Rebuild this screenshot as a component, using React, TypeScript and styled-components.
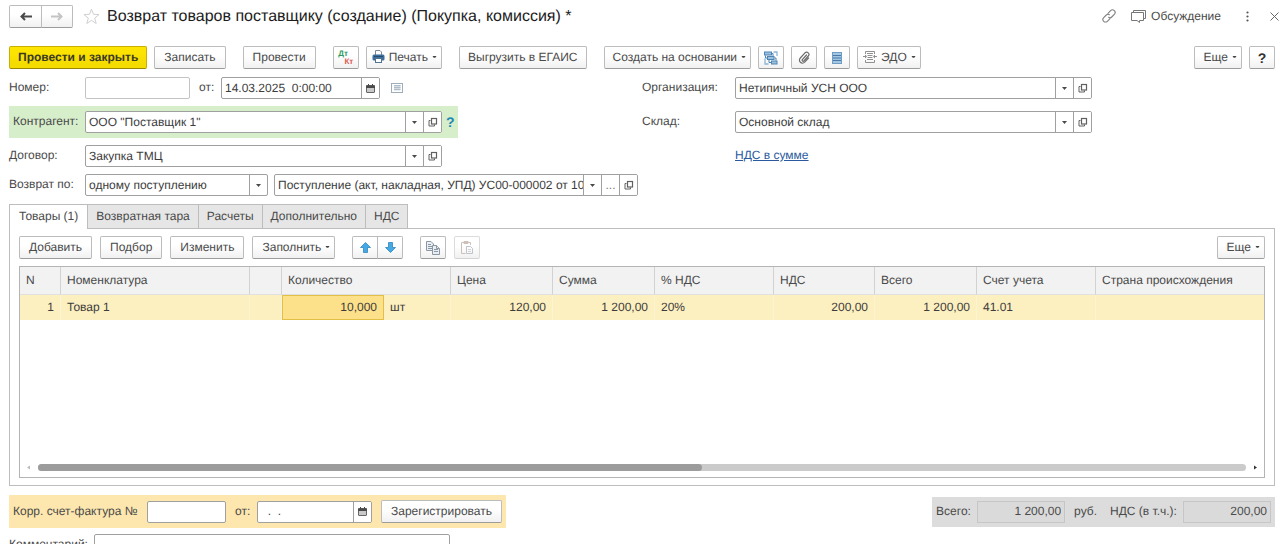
import React from "react";
import styled, { createGlobalStyle, css } from "styled-components";

const Global = createGlobalStyle`
  *, *::before, *::after { box-sizing: border-box; }
  body { margin: 0; background: #fff; text-rendering: geometricPrecision; }
  body, button, input, select {
    font-family: "Liberation Sans", Arial, sans-serif;
    font-size: 12px;
    line-height: 16px;
    color: #4a4a4a;
  }
  button, input, select { text-rendering: inherit; }
`;

const Page = styled.main`
  max-height: calc(100vh - 5px);
  overflow: hidden;
  padding: 5px 5px 0 9px;
`;

const TitleBar = styled.header`
  display: flex;
  align-items: center;
  height: 22px;
  margin-right: -4px;
`;

const Title = styled.h1`
  margin: 0 auto 0 7px;
  padding-top: 2px;
  font-size: 16px;
  line-height: 20px;
  font-weight: 400;
  color: #1c1c1c;
  white-space: nowrap;
`;

const Plain = styled.button`
  display: flex;
  align-items: center;
  gap: 5px;
  padding: 0;
  border: 0;
  background: none;
`;

const TitleActions = styled.div`
  display: flex;
  align-items: center;
  gap: 15px;
`;

const MenuActions = styled.div`
  display: flex;
  align-items: center;
  gap: 21px;
  margin-left: 10px;
`;

const Pair = styled.div`
  display: flex;
  button:first-child { border-radius: 2px 0 0 2px; }
  button:last-child { border-radius: 0 2px 2px 0; margin-left: -1px; }
`;

const Button = styled.button<{
  $primary?: boolean;
  $menu?: boolean;
  $lead?: boolean;
  $long?: boolean;
  $icon?: number;
  $dim?: boolean;
}>`
  --side: ${(p) => (p.$long ? 8 : 9)}px;
  display: flex;
  flex: none;
  align-items: center;
  justify-content: center;
  gap: 4px;
  height: 23px;
  padding: 0 ${(p) => (p.$menu ? "4px" : "var(--side)")} 2px ${(p) => (p.$lead ? "5px" : "var(--side)")};
  border: 1px solid ${(p) => (p.$dim ? "#dcdcdc" : "#bcbcbc")};
  border-bottom-color: ${(p) => (p.$dim ? "#d4d4d4" : "#9c9c9c")};
  border-radius: 2px;
  background: linear-gradient(#fff 40%, #f1f1f1);
  white-space: nowrap;
  ${(p) => p.$icon && css`width: ${p.$icon}px; padding: 0;`}
  ${(p) =>
    p.$primary &&
    css`
      border-color: #c9b000;
      border-bottom-color: #9b8800;
      background: linear-gradient(#ffe600, #f3da00);
      color: #3a3a20;
      font-weight: 700;
    `}
`;

const Mark = styled.b`
  font-size: 14px;
  color: #333;
`;

const Toolbar = styled.div<{ $top?: number; $gap: number }>`
  display: flex;
  align-items: center;
  gap: ${(p) => p.$gap}px;
  margin-top: ${(p) => p.$top ?? 0}px;
`;

const Gap = styled.span<{ $w: number }>`
  width: ${(p) => p.$w}px;
`;

const Spring = styled.span`
  flex: 1;
`;

const FormGrid = styled.div`
  display: grid;
  grid-template-columns: 1fr 1fr;
  margin-top: 8px;
`;

const Column = styled.div<{ $gap: number }>`
  display: flex;
  flex-direction: column;
  align-items: flex-start;
  gap: ${(p) => p.$gap}px;
`;

const Row = styled.div<{ $tint?: string }>`
  display: flex;
  align-items: center;
  min-height: 22px;
  ${(p) =>
    p.$tint &&
    css`
      padding: 5px 4px;
      background: ${p.$tint};
    `}
`;

const Label = styled.label<{ $w?: number }>`
  flex: none;
  width: ${(p) => (p.$w ? p.$w + "px" : "auto")};
  padding-bottom: 2px;
  white-space: nowrap;
`;

const FieldBox = styled.div<{ $w: number; $soft?: boolean }>`
  display: flex;
  width: ${(p) => p.$w}px;
  height: 22px;
  border: 1px solid ${(p) => (p.$soft ? "#c4c4c4" : "#a0a0a0")};
  border-radius: 2px;
  background: #fff;
  overflow: hidden;
`;

const TextInput = styled.input`
  flex: 1;
  min-width: 0;
  padding: 0 0 1px 3px;
  border: 0;
  background: none;
  color: #3c3c3c;
`;

const FieldButton = styled.button`
  display: flex;
  flex: none;
  align-items: center;
  justify-content: center;
  width: 18px;
  padding: 0;
  border: 0;
  border-left: 1px solid #a0a0a0;
  background: #fff;
  color: #777;
`;

const SelectBox = styled.div`
  display: grid;
  width: 183px;
  height: 22px;
  border: 1px solid #a0a0a0;
  border-radius: 2px;
  > * { grid-area: 1 / 1; }
`;

const Select = styled.select`
  appearance: none;
  padding: 0 20px 1px 3px;
  border: 0;
  background: none;
  color: #3c3c3c;
`;

const SelectArrow = styled.span`
  display: flex;
  align-items: center;
  justify-content: center;
  justify-self: end;
  width: 18px;
  border-left: 1px solid #a0a0a0;
  pointer-events: none;
`;

const Link = styled.a`
  padding-bottom: 2px;
  color: #2a5aa0;
  text-decoration: underline;
`;

const HelpLink = styled.button`
  width: 12px;
  padding: 0 0 0 4px;
  border: 0;
  background: none;
  color: #1d87b5;
  font-size: 14px;
  font-weight: 700;
`;

const Tabs = styled.div`
  display: flex;
  margin-top: 8px;
`;

const Tab = styled.button<{ $active?: boolean }>`
  position: relative;
  height: ${(p) => (p.$active ? 25 : 24)}px;
  margin-bottom: ${(p) => (p.$active ? -1 : 0)}px;
  padding: 0 ${(p) => (p.$active ? 9 : 8)}px 2px;
  border: 1px solid #bdbdbd;
  border-left-width: ${(p) => (p.$active ? 1 : 0)}px;
  border-bottom-width: 0;
  background: ${(p) => (p.$active ? "#fff" : "#e6e6e6")};
`;

const Panel = styled.section`
  padding: 7px 9px 7px;
  border: 1px solid #bdbdbd;
`;

const TableFrame = styled.div`
  margin-top: 7px;
  border: 1px solid #b4b4b4;
`;

const Table = styled.table`
  width: 100%;
  table-layout: fixed;
  border-collapse: separate;
  border-spacing: 0;
`;

const Th = styled.th`
  height: 28px;
  padding: 0 6px 2px;
  border-right: 1px solid #d2d2d2;
  border-bottom: 1px solid #e0e0e0;
  background: #f2f2f2;
  font-weight: 400;
  text-align: left;
  white-space: nowrap;
  &:last-child { border-right: 0; }
`;

const Td = styled.td<{ $right?: boolean; $current?: boolean }>`
  height: 25px;
  padding: 0 6px 2px;
  border-right: 1px solid #fbf3d2;
  background: #fcefc0;
  color: #3c3c3c;
  text-align: ${(p) => (p.$right ? "right" : "left")};
  white-space: nowrap;
  &:last-child { border-right: 0; }
  ${(p) =>
    p.$current &&
    css`
      border: 1px solid #e3bf45;
      background: #fde08a;
    `}
`;

const TableSpace = styled.div`
  height: 144px;
`;

const ScrollRow = styled.div`
  display: flex;
  align-items: center;
  gap: 6px;
  height: 7px;
  margin: 0 6px 6px;
`;

const Track = styled.div`
  flex: 1;
  height: 7px;
  border-radius: 4px;
  background: #cbcbcb;
`;

const Thumb = styled.div`
  width: 55%;
  height: 7px;
  border-radius: 4px;
  background: #9c9c9c;
`;

const Footer = styled.footer`
  display: flex;
  align-items: center;
  justify-content: space-between;
  margin-top: 9px;
`;

const Totals = styled.div`
  display: flex;
  align-items: center;
  height: 30px;
  padding: 0 4px;
  background: #dcdcdc;
`;

const TotalField = styled.input`
  width: 88px;
  height: 22px;
  padding: 0 3px 2px;
  border: 1px solid #c6c6c6;
  background: #dadada;
  text-align: right;
`;

const Unit = styled.span`
  padding-bottom: 2px;
`;

const CommentRow = styled.div`
  display: flex;
  align-items: center;
  margin-top: 6px;
`;

const Caret = () => (
  <svg width="5" height="3" viewBox="0 0 5 3" aria-hidden="true">
    <path d="M0 0H5L2.5 3Z" fill="#4a4a4a" />
  </svg>
);

const Dash = () => (
  <svg width="5" height="3" viewBox="0 0 5 3" aria-hidden="true">
    <path d="M0.500 1H4.500L3.300 2.800H1.700Z" fill="#444" />
  </svg>
);

const OpenIcon = () => (
  <svg width="10" height="10" viewBox="0 0 10 10" fill="none" stroke="#606060" aria-hidden="true">
    <rect x="3.500" y="1.500" width="5" height="5.500" strokeWidth="1.200" />
    <path d="M2.500 3.500H1V9H6.500V7.500" />
  </svg>
);

const Calendar = () => (
  <svg width="9" height="9" viewBox="0 0 9 9" aria-hidden="true">
    <rect x="0.500" y="1.500" width="8" height="7" rx="0.500" fill="#c9c9c9" stroke="#666" />
    <path d="M0 1.500H9V4H0Z" fill="#4a4a4a" />
    <path d="M2.500 0V2M6.500 0V2" stroke="#4a4a4a" />
  </svg>
);

const ListIcon = () => (
  <svg width="12" height="10" viewBox="0 0 12 10" fill="none" aria-hidden="true">
    <rect x="0.500" y="0.500" width="11" height="9" stroke="#9fadb9" />
    <rect x="3" y="2" width="6.500" height="5.500" fill="#d5dde4" />
    <path d="M3 2.500H9.500M3 4.500H9.500M3 6.500H9.500" stroke="#a5b4c2" strokeWidth="0.800" />
  </svg>
);

const Arrow = ({ flip, color }: { flip?: boolean; color: string }) => (
  <svg width="12" height="9" viewBox="0 0 12 9" fill="none" stroke={color} strokeWidth="2" aria-hidden="true">
    <path d={flip ? "M0 4.500H10.500M7 1L10.500 4.500L7 8" : "M12 4.500H1.500M5 1L1.500 4.500L5 8"} />
  </svg>
);

const Star = () => (
  <svg width="17" height="17" viewBox="0 0 17 17" fill="none" stroke="#d0d0d0" aria-hidden="true">
    <path d="M8.500 1.200L10.500 6.300L16 6.600L11.700 10.100L13.200 15.500L8.500 12.400L3.800 15.500L5.300 10.100L1 6.600L6.500 6.300Z" />
  </svg>
);

const LinkIcon = () => (
  <svg width="14" height="14" viewBox="0 0 14 14" fill="none" stroke="#808080" strokeWidth="1.100" strokeLinecap="round" aria-hidden="true">
    <path d="M6 4.300L8.600 1.700A2.500 2.500 0 0 1 12.300 5.400L9.700 8A2.500 2.500 0 0 1 6.600 8.300" />
    <path d="M8 9.700L5.400 12.300A2.500 2.500 0 0 1 1.700 8.600L4.300 6A2.500 2.500 0 0 1 7.400 5.700" />
  </svg>
);

const Chat = () => (
  <svg width="15" height="13" viewBox="0 0 15 13" fill="none" stroke="#777" aria-hidden="true">
    <path d="M2.500 2V0.500H14.500V8.500H13" />
    <path d="M0.500 2.500H12.500V10.500H8.500V12.500L6 10.500H0.500Z" />
  </svg>
);

const Dots = () => (
  <svg width="3" height="11" viewBox="0 0 3 11" fill="#555" aria-hidden="true">
    <circle cx="1.500" cy="1.500" r="1.100" />
    <circle cx="1.500" cy="5.500" r="1.100" />
    <circle cx="1.500" cy="9.500" r="1.100" />
  </svg>
);

const Cross = () => (
  <svg width="9" height="9" viewBox="0 0 9 9" stroke="#666" aria-hidden="true">
    <path d="M0.500 0.500L8.500 8.500M8.500 0.500L0.500 8.500" />
  </svg>
);

const DtKt = styled.span`
  display: grid;
  width: 15px;
  font-size: 8px;
  line-height: 8px;
  font-weight: 700;
  color: #2f9a61;
  text-align: left;
  b { color: #e05a54; text-align: right; }
`;

const Printer = () => (
  <svg width="13" height="13" viewBox="0 0 13 13" aria-hidden="true">
    <path d="M3.500 5V0.500H8L9.500 2V5" fill="#fff" stroke="#7a8b99" />
    <rect x="0.500" y="4.500" width="12" height="6" rx="1.500" fill="#3d6f9c" />
    <rect x="3.500" y="8.500" width="6" height="4" fill="#fff" stroke="#4f7391" />
    <path d="M2 6.500H11" stroke="#284c6d" />
  </svg>
);

const Structure = () => (
  <svg width="14" height="14" viewBox="0 0 14 14" fill="none" aria-hidden="true">
    <path d="M9.500 1H13V5M1 7.500V13H4.500" stroke="#8db4d6" strokeWidth="1.300" />
    <g fill="#9cc0de" stroke="#4d85b5">
      <rect x="0.500" y="1" width="7" height="3" />
      <rect x="3.500" y="5.500" width="6.500" height="3" />
      <rect x="7.500" y="10" width="5.500" height="3" />
    </g>
    <path d="M1.500 4.500V7H3M7.500 2.500H9V5M5 9V11.500H7M10.500 7H12V9.500" stroke="#4d85b5" />
  </svg>
);

const Clip = () => (
  <svg width="12" height="13" viewBox="0 0 12 13" fill="none" stroke="#6c6c6c" strokeWidth="1.200" strokeLinecap="round" aria-hidden="true">
    <path d="M8.500 4L4.300 8.700A1 1 0 0 0 5.800 10L10.300 5A2.300 2.300 0 0 0 7 1.800L2.300 7A3 3 0 0 0 6.700 11.200L10.500 7" />
  </svg>
);

const Sheet = () => (
  <svg width="10" height="12" viewBox="0 0 10 12" aria-hidden="true">
    <rect x="0.500" y="0.500" width="9" height="11" fill="#a3c6e2" stroke="#6f9dc4" />
    <path d="M1 3.500H9M1 6H9M1 8.500H9" stroke="#4679a8" />
  </svg>
);

const Edo = () => (
  <svg width="14" height="12" viewBox="0 0 14 12" fill="none" stroke="#909090" aria-hidden="true">
    <path d="M2.500 3V0.500H11.500V3M2.500 9V11.500H11.500V9M4 2.500H10M4.500 4.500H9.500M4.500 6.500H9.500M4 8.500H10M0 5.500H3M11 5.500H14" />
    <path d="M2 3.500L4 5.500L2 7.500M12 3.500L10 5.500L12 7.500" fill="#8a8a8a" stroke="none" />
  </svg>
);

const BlueArrow = ({ down }: { down?: boolean }) => (
  <svg width="11" height="11" viewBox="0 0 11 11" aria-hidden="true">
    <path
      d={down ? "M5.500 10.500L0.500 5.500H3.500V0.500H7.500V5.500H10.500Z" : "M5.500 0.500L0.500 5.500H3.500V10.500H7.500V5.500H10.500Z"}
      fill="#45a9e6"
      stroke="#2f86bd"
      strokeWidth="0.800"
    />
  </svg>
);

const Copy = () => (
  <svg width="14" height="14" viewBox="0 0 14 14" fill="#e9eef2" stroke="#8b98a3" aria-hidden="true">
    <path d="M0.500 0.500H5L7.500 3V9.500H0.500Z" />
    <path d="M2 3.500H5M2 5.500H6M2 7.500H6" />
    <path d="M6.500 4.500H10.500L13.500 7.500V13.500H6.500Z" />
    <path d="M8 8.500H12M8 10.500H12M10.500 4.500V7.500H13" />
  </svg>
);

const Paste = () => (
  <svg width="14" height="14" viewBox="0 0 14 14" fill="none" stroke="#cdc0ba" aria-hidden="true">
    <path d="M5.500 12.500H1.500V1.500H10.500V4M4 2.500V0.500H8V2.500Z" />
    <path d="M6.500 5.500H10.500L12.500 7.500V12.500H6.500Z" stroke="#bfc4c9" />
    <path d="M8 8.500H11M8 10.500H11" stroke="#d0d3d6" />
  </svg>
);

const Tip = ({ right }: { right?: boolean }) => (
  <svg width="6" height="5" viewBox="0 0 6 5" aria-hidden="true">
    <path d={right ? "M2 0.500V4.500L5 2.500Z" : "M4 0.500V4.500L1 2.500Z"} fill={right ? "#333" : "#bbb"} />
  </svg>
);

interface FieldProps {
  id: string;
  value?: string;
  label?: string;
  width?: number;
  more?: boolean;
}

const RefField = ({ id, value = "", label, width = 357, more }: FieldProps) => (
  <FieldBox $w={width}>
    <TextInput id={id} defaultValue={value} aria-label={label} />
    <FieldButton type="button" aria-label="Выбрать из списка"><Caret /></FieldButton>
    {more && <FieldButton type="button">...</FieldButton>}
    <FieldButton type="button" aria-label="Открыть"><OpenIcon /></FieldButton>
  </FieldBox>
);

const DateField = ({ id, value, width }: FieldProps) => (
  <FieldBox $w={width ?? 159}>
    <TextInput id={id} defaultValue={value} />
    <FieldButton type="button" aria-label="Календарь"><Calendar /></FieldButton>
  </FieldBox>
);

const columns: [string, number | undefined][] = [
  ["N", 41],
  ["Номенклатура", 189],
  ["", 32],
  ["Количество", 169],
  ["Цена", 102],
  ["Сумма", 102],
  ["% НДС", 119],
  ["НДС", 101],
  ["Всего", 102],
  ["Счет учета", 119],
  ["Страна происхождения", undefined],
];

const tabs = ["Товары (1)", "Возвратная тара", "Расчеты", "Дополнительно", "НДС"];

export default function App() {
  return (
    <>
      <Global />
      <Page>
        <TitleBar>
          <Pair>
            <Button $icon={33} aria-label="Назад"><Arrow color="#4a4a4a" /></Button>
            <Button $icon={32} aria-label="Вперед"><Arrow flip color="#c4c4c4" /></Button>
          </Pair>
          <Gap $w={10} />
          <Plain aria-label="Добавить в избранное"><Star /></Plain>
          <Title>Возврат товаров поставщику (создание) (Покупка, комиссия) *</Title>
          <TitleActions>
            <Plain aria-label="Получить ссылку"><LinkIcon /></Plain>
            <Plain><Chat />Обсуждение</Plain>
            <MenuActions>
              <Plain aria-label="Меню"><Dots /></Plain>
              <Plain aria-label="Закрыть"><Cross /></Plain>
            </MenuActions>
          </TitleActions>
        </TitleBar>

        <Toolbar $top={19} $gap={7}>
          <Button $primary $long>Провести и закрыть</Button>
          <Button>Записать</Button>
          <Gap $w={3} />
          <Button>Провести</Button>
          <Gap $w={3} />
          <Button $icon={26} aria-label="Дт Кт"><DtKt>Дт<b>Кт</b></DtKt></Button>
          <Button $lead $menu><Printer />Печать<Dash /></Button>
          <Gap $w={3} />
          <Button $long>Выгрузить в ЕГАИС</Button>
          <Gap $w={3} />
          <Button $long $menu>Создать на основании<Dash /></Button>
          <Button $icon={26} aria-label="Структура подчиненности"><Structure /></Button>
          <Button $icon={26} aria-label="Файлы"><Clip /></Button>
          <Button $icon={26} aria-label="Реестр"><Sheet /></Button>
          <Button $lead $menu><Edo />ЭДО<Dash /></Button>
          <Spring />
          <Button $menu>Еще<Dash /></Button>
          <Button $icon={26}><Mark>?</Mark></Button>
        </Toolbar>

        <FormGrid>
          <Column $gap={7}>
            <Row>
              <Label htmlFor="number" $w={76}>Номер:</Label>
              <FieldBox $w={105} $soft><TextInput id="number" /></FieldBox>
              <Gap $w={9} />
              <Label htmlFor="date" $w={22}>от:</Label>
              <DateField id="date" value="14.03.2025  0:00:00" />
              <Gap $w={11} />
              <ListIcon />
            </Row>
            <Row $tint="#d7eecb">
              <Label htmlFor="partner" $w={72}>Контрагент:</Label>
              <RefField id="partner" value={'ООО "Поставщик 1"'} />
              <HelpLink type="button">?</HelpLink>
            </Row>
            <Row>
              <Label htmlFor="contract" $w={76}>Договор:</Label>
              <RefField id="contract" value="Закупка ТМЦ" />
            </Row>
            <Row>
              <Label htmlFor="mode" $w={76}>Возврат по:</Label>
              <SelectBox>
                <Select id="mode"><option>одному поступлению</option></Select>
                <SelectArrow><Caret /></SelectArrow>
              </SelectBox>
              <Gap $w={6} />
              <RefField
                id="receipt"
                label="Поступление"
                value="Поступление (акт, накладная, УПД) УС00-000002 от 10"
                width={364}
                more
              />
            </Row>
          </Column>
          <Column $gap={12}>
            <Row>
              <Label htmlFor="org" $w={93}>Организация:</Label>
              <RefField id="org" value="Нетипичный УСН ООО" />
            </Row>
            <Row>
              <Label htmlFor="store" $w={93}>Склад:</Label>
              <RefField id="store" value="Основной склад" />
            </Row>
            <Row>
              <Gap $w={93} />
              <Link href="#vat">НДС в сумме</Link>
            </Row>
          </Column>
        </FormGrid>

        <Tabs role="tablist">
          {tabs.map((t, i) => (
            <Tab key={t} role="tab" aria-selected={i === 0} $active={i === 0}>{t}</Tab>
          ))}
        </Tabs>
        <Panel>
          <Toolbar $gap={8}>
            <Button>Добавить</Button>
            <Button>Подбор</Button>
            <Button>Изменить</Button>
            <Button $menu>Заполнить<Dash /></Button>
            <Gap $w={1} />
            <Pair>
              <Button $icon={26} aria-label="Вверх"><BlueArrow /></Button>
              <Button $icon={26} aria-label="Вниз"><BlueArrow down /></Button>
            </Pair>
            <Gap $w={1} />
            <Button $icon={26} aria-label="Копировать"><Copy /></Button>
            <Button $icon={26} $dim aria-label="Вставить"><Paste /></Button>
            <Spring />
            <Button $menu>Еще<Dash /></Button>
          </Toolbar>
          <TableFrame>
            <Table>
              <colgroup>
                {columns.slice(0, 3).map(([n, w]) => <col key={n} style={{ width: w }} />)}
                <col style={{ width: 102 }} />
                <col style={{ width: 67 }} />
                {columns.slice(4).map(([n, w]) => <col key={n} style={{ width: w }} />)}
              </colgroup>
              <thead>
                <tr>
                  {columns.map(([n]) => (
                    <Th key={n} colSpan={n === "Количество" ? 2 : 1}>{n}</Th>
                  ))}
                </tr>
              </thead>
              <tbody>
                <tr>
                  <Td $right>1</Td>
                  <Td>Товар 1</Td>
                  <Td />
                  <Td $right $current>10,000</Td>
                  <Td>шт</Td>
                  <Td $right>120,00</Td>
                  <Td $right>1 200,00</Td>
                  <Td>20%</Td>
                  <Td $right>200,00</Td>
                  <Td $right>1 200,00</Td>
                  <Td>41.01</Td>
                  <Td />
                </tr>
              </tbody>
            </Table>
            <TableSpace />
            <ScrollRow>
              <Tip />
              <Track><Thumb /></Track>
              <Tip right />
            </ScrollRow>
          </TableFrame>
        </Panel>

        <Footer>
          <Row $tint="#fde7ae">
            <Label htmlFor="invoice" $w={134}>Корр. счет-фактура №</Label>
            <FieldBox $w={79}><TextInput id="invoice" /></FieldBox>
            <Gap $w={9} />
            <Label htmlFor="invoiceDate" $w={22}>от:</Label>
            <DateField id="invoiceDate" value="  .  ." width={115} />
            <Gap $w={9} />
            <Button>Зарегистрировать</Button>
          </Row>
          <Totals>
            <Label htmlFor="total" $w={41}>Всего:</Label>
            <TotalField id="total" readOnly value="1 200,00" />
            <Gap $w={9} />
            <Unit>руб.</Unit>
            <Gap $w={13} />
            <Label htmlFor="vat" $w={73}>НДС (в т.ч.):</Label>
            <TotalField id="vat" readOnly value="200,00" />
          </Totals>
        </Footer>
        <CommentRow>
          <Label htmlFor="comment" $w={85}>Комментарий:</Label>
          <FieldBox $w={356}><TextInput id="comment" /></FieldBox>
        </CommentRow>
      </Page>
    </>
  );
}
